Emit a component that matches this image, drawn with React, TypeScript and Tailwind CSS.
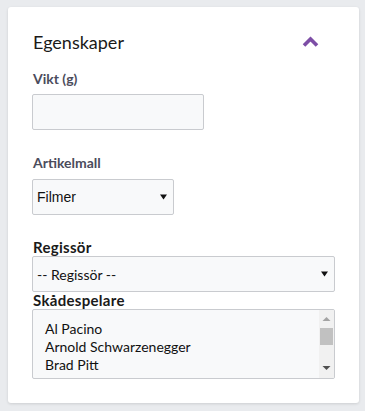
import React from "react";

function Caret({ className }: { className?: string }) {
  return (
    <svg width="7" height="6" viewBox="0 0 7 6" className={className}>
      <polygon points="0,0.5 7,0.5 3.5,5.5" fill="#111" />
    </svg>
  );
}

export default function App() {
  return (
    <div className="w-[365px] h-[411px] bg-[#e9ebee] pt-[7px] pl-[8px]" style={{ fontFamily: "Lato, 'Liberation Sans', sans-serif" }}>
      <div className="w-[351px] h-[396px] bg-white rounded-[3px] shadow-[0_1px_3px_rgba(0,0,0,0.12)] pt-[23px] pl-[24px] pr-[24px] flex flex-col">
        <div className="flex items-center justify-between h-[24px] pl-[1px]">
          <span className="text-[18px] leading-[24px] text-[#1a1a1a]">Egenskaper</span>
          <svg width="17" height="11" viewBox="0 0 17 11" className="mr-[16px] mt-[-2px]">
            <polyline points="2,9.5 8.5,3 15,9.5" fill="none" stroke="#7d4ea6" strokeWidth="3.6" strokeLinecap="butt" strokeLinejoin="miter" />
          </svg>
        </div>

        <div className="mt-[15px] pl-[1px] text-[14px] leading-[20px] font-bold text-[#4b4c5c]">Vikt (g)</div>
        <div className="mt-[5px] w-[172px] h-[36px] border border-[#c9cbcf] rounded-[2px] bg-[#f8f9fa]" />

        <div className="mt-[23px] pl-[1px] text-[14px] leading-[20px] font-bold text-[#4b4c5c]">Artikelmall</div>
        <div className="mt-[6px] w-[142px] h-[36px] border border-[#c9cbcf] rounded-[2px] bg-[#f8f9fa] flex items-center justify-between pl-[4px] pr-[6px]">
          <span className="text-[14px] text-[#111]" style={{ fontFamily: "'Liberation Sans', Arial, sans-serif" }}>Filmer</span>
          <Caret className="mt-[-1px]" />
        </div>

        <div className="mt-[24px] pl-[1px] text-[15px] leading-[17px] tracking-[0.3px] font-bold text-[#1a1a1a]">Regissör</div>
        <div className="w-[303px] h-[36px] border border-[#c9cbcf] rounded-[2px] bg-[#f8f9fa] flex items-center justify-between pl-[4px] pr-[6px]">
          <span className="text-[14px] text-[#111]">-- Regissör --</span>
          <Caret />
        </div>
        <div className="pl-[1px] text-[15px] leading-[17px] tracking-[0.3px] font-bold text-[#1a1a1a]">Skådespelare</div>
        <div className="w-[303px] h-[70px] border border-[#c9cbcf] rounded-[2px] bg-[#f8f9fa] flex overflow-hidden">
          <div className="flex-1 pt-[10px] pl-[12px] text-[14px] leading-[18px] text-[#111]">
            <div>Al Pacino</div>
            <div>Arnold Schwarzenegger</div>
            <div>Brad Pitt</div>
          </div>
          <div className="w-[15px] bg-[#f1f1f1] flex flex-col items-center">
            <svg width="9" height="6" viewBox="0 0 9 6" className="mt-[6px]">
              <polygon points="0.5,5 8.5,5 4.5,1" fill="#a3a3a3" />
            </svg>
            <div className="mt-[6px] w-[13px] h-[17px] bg-[#c1c1c1]" />
            <div className="flex-1" />
            <svg width="9" height="6" viewBox="0 0 9 6" className="mb-[7px]">
              <polygon points="0.5,1 8.5,1 4.5,5" fill="#505050" />
            </svg>
          </div>
        </div>
      </div>
    </div>
  );
}
